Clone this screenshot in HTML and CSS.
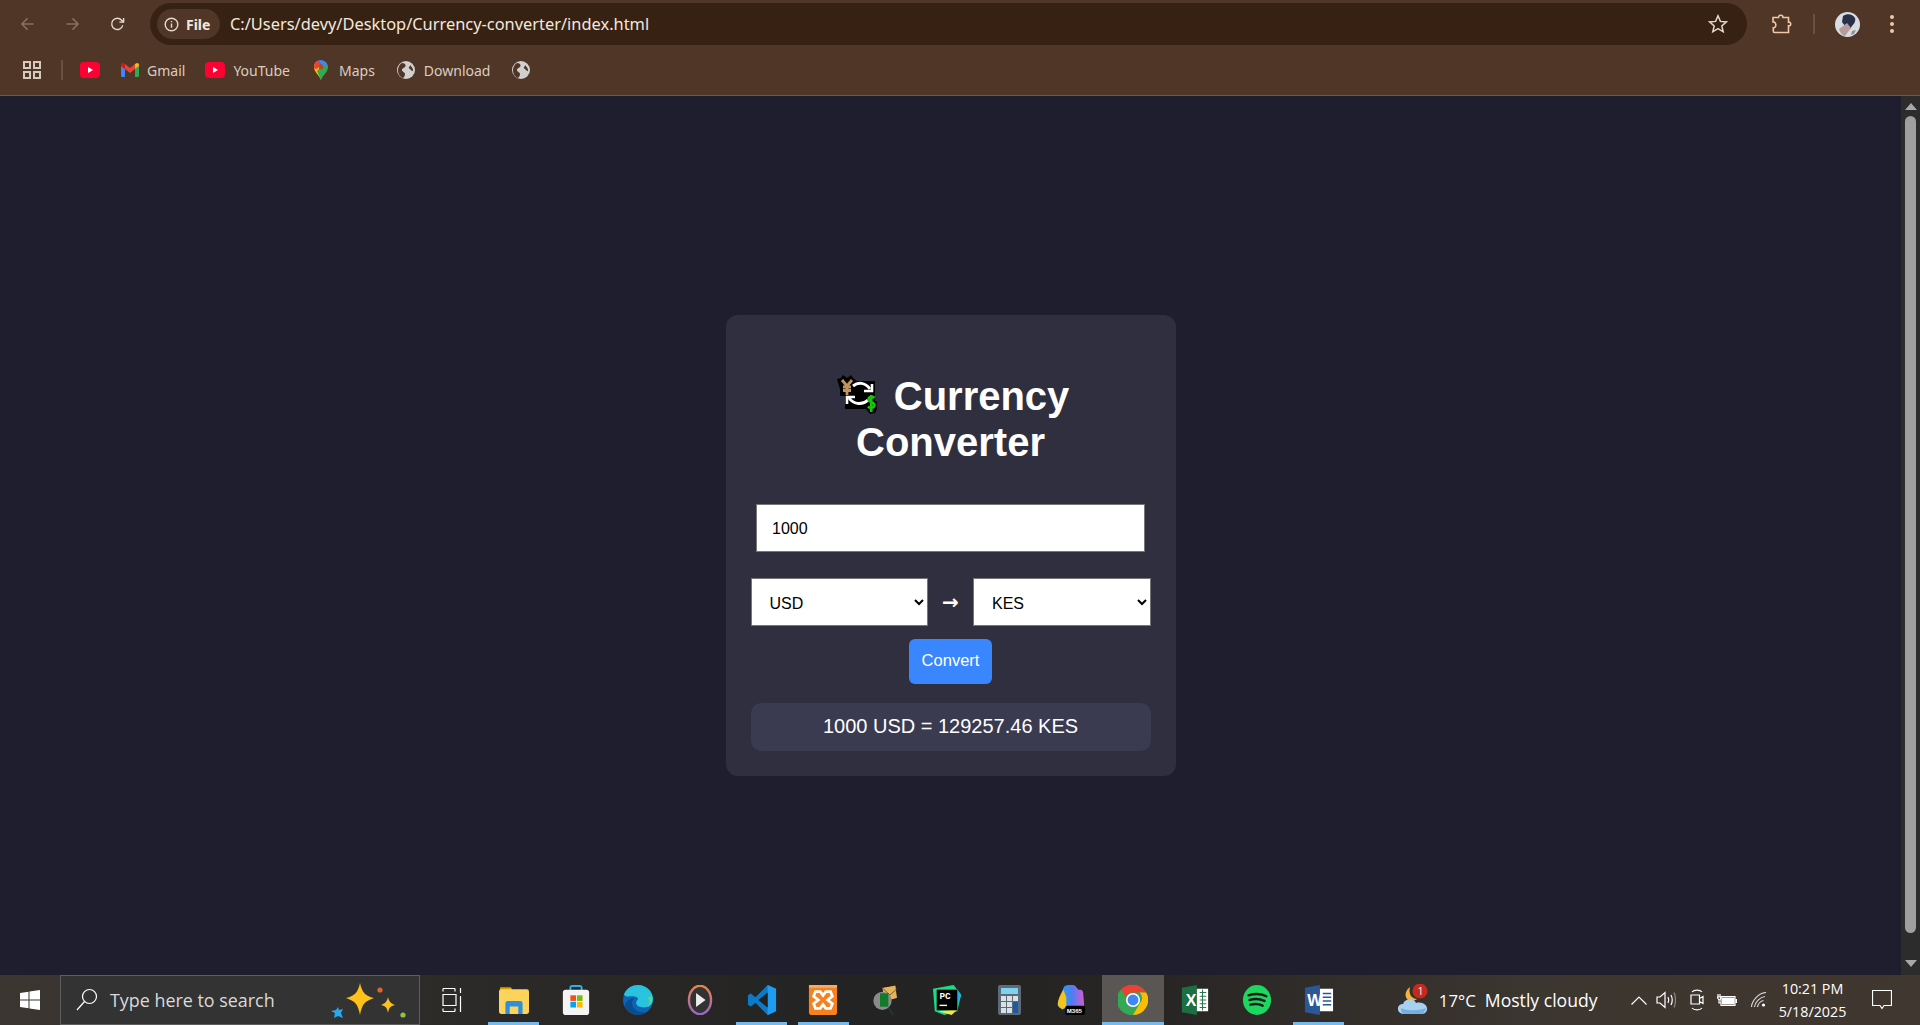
FILE: index.html
```html
<!DOCTYPE html>
<html lang="en">
<head>
<meta charset="utf-8">
<title>Currency Converter</title>
<link rel="stylesheet" href="styles.css">
</head>
<body>
<header class="chrome">
  <div class="toolbar">
    <div class="nav">
      <svg class="nav-icon" viewBox="0 0 16 16"><path d="M14.5 8H2M8 2 2 8l6 6" class="dim"/></svg>
      <svg class="nav-icon" viewBox="0 0 16 16"><path d="M1.5 8H14M8 2l6 6-6 6" class="dim"/></svg>
      <svg class="nav-icon" viewBox="0 0 16 16"><path d="M13.6 9.5A6 6 0 1 1 12.4 4L14.5 6M14.5 1.500V6H10" class="lit"/></svg>
    </div>
    <div class="omnibox">
      <div class="chip">
        <svg class="info" viewBox="0 0 16 16"><circle cx="8" cy="8" r="6.700" class="lit"/><path d="M8 7v4.500M8 4.200v1.300" class="lit"/></svg>
        <span>File</span>
      </div>
      <span class="url">C:/Users/devy/Desktop/Currency-converter/index.html</span>
      <svg class="star" viewBox="0 0 20 20"><path d="M10 1.800l2.400 5.600 6 .5-4.600 4 1.400 5.900L10 14.700l-5.200 3.100 1.400-5.900-4.600-4 6-.5z" class="lit"/></svg>
    </div>
    <div class="actions">
      <svg class="puzzle" viewBox="0 0 20 20"><path d="M1 3.500h5.500c0-3 4.500-3 4.500 0h5.500v4.700c3-.6 3 4.200 0 3.600v6.700H2.500c-.8 0-1.200-.5-1.200-1.200v-3.600c3.400.3 3.400-6-.3-5.800z" class="peach"/></svg>
      <span class="sep"></span>
      <svg class="avatar" viewBox="0 0 25 25">
        <circle cx="12.500" cy="12.500" r="12.500" fill="#d9dde2"/>
        <path d="M8 4c4-3 10-2 12 2 1 3-1 6-3 8l-2 3-5-3-3-4z" fill="#28304a"/>
        <path d="M4 17l8-6 4 5-6 8c-2 0-5-3-6-7z" fill="#b99a9c"/>
        <path d="M17 19l4-1-2 4-3 1z" fill="#8f8f93"/>
      </svg>
      <span class="menu"><i></i><i></i><i></i></span>
    </div>
  </div>
  <nav class="bookmarks">
    <svg class="apps" viewBox="0 0 18 18"><path d="M1 1h6v6H1zM11 1h6v6h-6zM1 11h6v6H1zM11 11h6v6h-6z" class="grid"/></svg>
    <span class="book-sep"></span>
    <svg class="yt yt-first" viewBox="0 0 20 16"><rect width="20" height="16" rx="4" fill="#ff0033"/><path d="M8 5l5 3-5 3z" fill="#fff"/></svg>
    <div class="mark mark-gmail">
      <svg class="gm" viewBox="0 0 18 14"><path d="M0 3v9.500c0 .8.5 1.500 1.300 1.500H4V6z" fill="#4285f4"/><path d="M14 6v8h2.700c.8 0 1.300-.7 1.300-1.500V3z" fill="#34a853"/><path d="M4 6v8h0V6l5 4 5-4V1l-5 4-5-4z" fill="#ea4335"/><path d="M0 3l4 3V1L2.500.2C1.300-.4 0 .6 0 2z" fill="#c5221f"/><path d="M14 1v5l4-3V2c0-1.400-1.300-2.400-2.500-1.800z" fill="#fbbc04"/></svg>
      <span>Gmail</span>
    </div>
    <div class="mark mark-yt">
      <svg class="yt" viewBox="0 0 20 16"><rect width="20" height="16" rx="4" fill="#ff0033"/><path d="M8 5l5 3-5 3z" fill="#fff"/></svg>
      <span>YouTube</span>
    </div>
    <div class="mark mark-maps">
      <svg class="pin" viewBox="0 0 14 20"><path d="M7 20C5 15 0 12 0 7a7 7 0 0 1 4-6.300L7 7z" fill="#fbbc04"/><path d="M7 20c2-5 7-8 7-13 0-1-.2-2-.7-3L7 7 3 11z" fill="#34a853"/><path d="M4 .7A7 7 0 0 1 13.300 4L10 7 7 4.500z" fill="#4285f4"/><path d="M1 3.500A7 7 0 0 1 4 .7L7 4 3 9 .3 8.500C-.2 6.500 0 5 1 3.500z" fill="#ea4335"/><circle cx="7" cy="7" r="2.400" fill="#a5531f"/></svg>
      <span>Maps</span>
    </div>
    <div class="mark mark-dl">
      <svg class="globe" viewBox="0 0 18 18"><circle cx="9" cy="9" r="9" fill="#d2d0ce"/><path d="M5 2c2 0 4 1 3.500 3S5 7 5 9s3 2 3 4-1 3-2 4c-3-1-5-4-5-8 0-3 2-6 4-7zM13 4c1 1 3 3 3 5s-1 1-2 0-3-2-2-3 1-1 1-2z" fill="#4f3626"/></svg>
      <span>Download</span>
    </div>
    <svg class="globe globe-last" viewBox="0 0 18 18"><circle cx="9" cy="9" r="9" fill="#d2d0ce"/><path d="M5 2c2 0 4 1 3.500 3S5 7 5 9s3 2 3 4-1 3-2 4c-3-1-5-4-5-8 0-3 2-6 4-7zM13 4c1 1 3 3 3 5s-1 1-2 0-3-2-2-3 1-1 1-2z" fill="#4f3626"/></svg>
  </nav>
</header>

<div class="viewport">
  <main class="page">
    <section class="card">
      <h1 class="title"><svg class="emoji" viewBox="0 0 46 40">
          <path d="M0 4l4-1 2-3 4 3 4-3 3 4 3 2h18v20l2 1v7l-2 4-5 1-4-5H8V21H3V14z" fill="#000"/>
          <path d="M5 5l5 6 5-6M10 11v9M6 12h8M6 15.500h8" fill="none" stroke="#c1935f" stroke-width="2.800"/>
          <path d="M16 11c5-4 12-4 17 3" fill="none" stroke="#fff" stroke-width="3"/>
          <path d="M27 16h8V9" fill="none" stroke="#fff" stroke-width="2.600"/>
          <path d="M31 25c-5 5-14 5-19-2" fill="none" stroke="#fff" stroke-width="3"/>
          <path d="M18 22h-8v7" fill="none" stroke="#fff" stroke-width="2.600"/>
          <path d="M37.500 23c-2-2-6-1-6 1.500s6 2.500 6 5.500-4.500 3.500-6.500 1.500M34.300 20v17" fill="none" stroke="#16c60c" stroke-width="2.600"/>
        </svg> Currency Converter</h1>
      <input class="amount" type="number" value="1000">
      <div class="pair">
        <select class="currency"><option>USD</option></select>
        <span class="arrow">→</span>
        <select class="currency"><option>KES</option></select>
      </div>
      <button class="convert" type="button">Convert</button>
      <div class="result">1000 USD = 129257.46 KES</div>
    </section>
  </main>
  <aside class="scrollbar">
    <span class="sb-up"></span>
    <span class="sb-thumb"></span>
    <span class="sb-down"></span>
  </aside>
</div>

<footer class="taskbar">
  <div class="start">
    <svg class="winlogo" viewBox="0 0 20 20"><path d="M0 3l8.500-1.200v7.600H0zM9.500 1.600L20 0v9.400H9.500zM0 10.500h8.500v7.700L0 17zM9.500 10.500H20V20L9.500 18.400z" fill="#fff"/></svg>
  </div>
  <div class="search">
    <svg class="lens" viewBox="0 0 22 24"><circle cx="13.500" cy="8.500" r="7" class="line"/><path d="M8.500 13.500 1 22" class="line"/></svg>
    <span class="search-text">Type here to search</span>
    <svg class="sparkle" viewBox="0 0 78 36">
      <path d="M30 1c2 9 5 13 14 15-9 3-12 6-14 17-2-11-5-14-14-17 9-2 12-6 14-15z" fill="#fcc21b"/>
      <path d="M58 15c1 4 2 6 7 8-5 1-6 3-7 8-1-5-2-7-7-8 5-2 6-4 7-8z" fill="#fcc21b"/>
      <path d="M8 25l1 3 4-1-2 4 2 5-5-2-4 2 1-5-4-2 5-1z" fill="#29a8ea"/>
      <circle cx="50" cy="8" r="2.600" fill="#e2632a"/><circle cx="73" cy="33" r="2.600" fill="#8cc63e"/>
    </svg>
  </div>
  <div class="taskview">
    <svg viewBox="0 0 20 24" class="tv"><path d="M1 .5h12M1 .5v3M13 .5v3M1 6.500h13v11H1zM1 23.500h12M1 20.500v3M13 20.500v3M18.500 0v5M18.500 8v16" class="line"/></svg>
  </div>
  <div class="apps-row">
    <div class="slot on">
      <svg class="app" viewBox="0 0 28 28"><path d="M1 2h10l2 3H1z" fill="#d9a200"/><rect x="0" y="4" width="28" height="23" rx="2" fill="#fcd45c"/><path d="M6 27V17c0-1 1-2 2-2h12c1 0 2 1 2 2v10h-4v-7h-8v7z" fill="#2f8fdc"/></svg>
    </div>
    <div class="slot">
      <svg class="app" viewBox="0 0 30 32"><path d="M9 7V3c0-1.500 1-2 2-2h8c1 0 2 .5 2 2v4" fill="none" stroke="#2bb0e6" stroke-width="2"/><rect x="1" y="5" width="28" height="27" rx="3" fill="#f4f4f4"/><rect x="9" y="11" width="6" height="6" fill="#f25022"/><rect x="16" y="11" width="6" height="6" fill="#7fba00"/><rect x="9" y="18" width="6" height="6" fill="#00a4ef"/><rect x="16" y="18" width="6" height="6" fill="#ffb900"/></svg>
    </div>
    <div class="slot">
      <svg class="app" viewBox="0 0 32 32"><circle cx="16" cy="16" r="16" fill="#0d63b4"/><path d="M1 10C4 3 10 0 16 0c9 0 16 7 16 15 0 6-5 9-10 9-4 0-8-2-8-5 0-2 2-3 2-4 0-2-3-3-6-3-4 0-7 1-9-2z" fill="#2ac3de"/><path d="M12 14c-5 0-10 4-10 9 3 6 8 9 14 9 3 0 6-1 8-3-5 1-12-2-14-7-1-3 0-6 2-8z" fill="#0a4d8f"/><path d="M31 12c1 5-1 10-5 12 3-3 3-8 0-11z" fill="#58d68d"/></svg>
    </div>
    <div class="slot">
      <svg class="app" viewBox="0 0 32 38"><defs><linearGradient id="mp" x1="0" y1="0" x2="0" y2="1"><stop offset="0" stop-color="#e8834c"/><stop offset="1" stop-color="#9a68c4"/></linearGradient></defs><ellipse cx="16" cy="19" rx="14" ry="18" fill="#333" stroke="url(#mp)" stroke-width="3"/><path d="M11 10l12 9-12 9z" fill="#eee"/></svg>
    </div>
    <div class="slot on">
      <svg class="app" viewBox="0 0 30 32"><path d="M21 0l9 4v24l-9 4L8 19l-5 4-3-2v-10l3-2 5 4z" fill="#0a7cc7"/><path d="M21 8v16l-10-8z" fill="#1e1e2f"/><path d="M21 0l9 4v24l-9 4z" fill="#1f9cf0"/><path d="M21 8v16l-8-8z" fill="#22221f"/></svg>
    </div>
    <div class="slot on">
      <svg class="app" viewBox="0 0 30 32"><rect width="30" height="32" rx="3" fill="#f5811f"/><rect y="0" width="30" height="3" fill="#f8a968"/><path d="M7 7h5l3 4 3-4h5l2 5-5 4 5 4-2 5h-5l-3-4-3 4H7l-2-5 5-4-5-4z" fill="none" stroke="#fff" stroke-width="3"/></svg>
    </div>
    <div class="slot">
      <svg class="app" viewBox="0 0 30 36"><path d="M11 3l17-3 2 16-15 4z" fill="#e6b45c" stroke="#111" stroke-width="1"/><path d="M11 3l10 9 9-8" fill="none" stroke="#6a4a1c"/><circle cx="12" cy="19" r="11" fill="#8a8a8a"/><rect x="9" y="10" width="10" height="16" fill="#127a2b"/><path d="M19 27l6 9" stroke="#333" stroke-width="2"/></svg>
    </div>
    <div class="slot">
      <svg class="app" viewBox="0 0 30 32"><path d="M0 4l22-4 8 10-4 18-14 4-10-4z" fill="#21d789"/><path d="M26 4l4 8-4 8z" fill="#21aef0"/><path d="M6 28l14 4 6-6z" fill="#f5e642"/><rect x="4" y="5" width="22" height="22" fill="#000"/><text x="7" y="15" class="pc">PC</text><rect x="7" y="21" width="8" height="1.500" fill="#fff"/></svg>
    </div>
    <div class="slot">
      <svg class="app app-calc" viewBox="0 0 23 30"><rect width="23" height="30" rx="2" fill="#5d6b78"/><rect x="3" y="3" width="17" height="6" fill="#7ed1f0"/><path d="M3 11h5v5H3zM9 11h5v5H9zM15 11h5v5h-5zM3 17h5v5H3zM9 17h5v5H9zM3 23h5v5H3zM9 23h5v5H9z" fill="#d9e1e6"/><rect x="15" y="17" width="5" height="11" fill="#1b5aa6"/></svg>
    </div>
    <div class="slot">
      <svg class="app" viewBox="0 0 30 32"><defs><linearGradient id="cp" x1="0" y1="0" x2="1" y2="0"><stop offset="0" stop-color="#1fa8e8"/><stop offset=".55" stop-color="#4f7df0"/><stop offset="1" stop-color="#d65ad6"/></linearGradient></defs><path d="M7 3c1-2 3-3 5-3h5c2 0 3 1 4 3l2 2h2c2 0 3 2 3 4l1 12c0 3-2 4-4 4H6c-4 0-6-3-5-6z" fill="url(#cp)"/><path d="M7 5C3 11 1 16 1 20c0 3 3 5 5 6l4-3V13z" fill="#f6c21c"/><rect x="9" y="22" width="21" height="10" rx="2" fill="#000"/><text x="10.500" y="30" class="m365">M365</text></svg>
    </div>
    <div class="slot active">
      <svg class="app" viewBox="0 0 32 32"><circle cx="16" cy="16" r="16" fill="#34a853"/><path d="M16 0a16 16 0 0 1 14 8H16a8 8 0 0 0-7.500 5L3 5A16 16 0 0 1 16 0z" fill="#ea4335"/><path d="M30 8a16 16 0 0 1-14 24l7-12a8 8 0 0 0 0-12z" fill="#fbbc04"/><path d="M3 5l7 12 6 15A16 16 0 0 1 3 5z" fill="#34a853"/><circle cx="16" cy="16" r="7.500" fill="#fff"/><circle cx="16" cy="16" r="5.800" fill="#4285f4"/></svg>
    </div>
    <div class="slot">
      <svg class="app" viewBox="0 0 28 32"><path d="M16 0v32L0 29V3z" fill="#1d6f42"/><rect x="16" y="4" width="12" height="24" fill="#fff"/><path d="M19 8h7M19 12h7M19 16h7M19 20h7M19 24h7M22 5v22" stroke="#1d6f42" stroke-width="1"/><text x="4" y="22" class="doc">X</text></svg>
    </div>
    <div class="slot">
      <svg class="app" viewBox="0 0 30 32"><ellipse cx="15" cy="16" rx="15" ry="16" fill="#1ed760"/><path d="M6 11c6-2 13-2 19 1M7 16c5-1.500 11-1.500 16 1M8 21c4-1 9-1 13 1" fill="none" stroke="#1b1b1b" stroke-width="2.600" stroke-linecap="round"/></svg>
    </div>
    <div class="slot on">
      <svg class="app" viewBox="0 0 30 32"><path d="M16 0v32L0 29V3z" fill="#2b5797"/><rect x="16" y="4" width="14" height="24" fill="#fff"/><path d="M19 9h9M19 13h9M19 17h9M19 21h9" stroke="#2b5797" stroke-width="1.500"/><text x="2.500" y="22" class="doc">W</text></svg>
    </div>
  </div>
  <div class="tray">
    <svg class="weather" viewBox="0 0 30 32"><path d="M12 3C8 6 6 11 9 15c3 3 8 2 10 0-5 0-9-5-7-12z" fill="#f3b33d"/><path d="M6 30c-8 0-8-10-1-10 2-6 11-6 13-1 7-2 12 3 11 7-1 3-3 4-6 4z" fill="#a8d0f0"/><path d="M3 24c5 3 18 3 25 0-1 4-3 6-6 6H6c-2 0-3-3-3-6z" fill="#77aee0"/><circle cx="22" cy="7" r="7.500" fill="#c42b1c"/><text x="19.800" y="10.500" class="badge">1</text></svg>
    <span class="temp">17°C</span>
    <span class="cond">Mostly cloudy</span>
    <svg class="t-chev" viewBox="0 0 16 9"><path d="M.5 8.500 8 1l7.500 7.500" class="line"/></svg>
    <svg class="t-vol" viewBox="0 0 20 18"><path d="M1 6h3l5-4.500v15L4 12H1z" class="line"/><path d="M12 6c1 2 1 4 0 6M15 4c1.500 3 1.500 7 0 10" class="line"/><path d="M18 1.500c2 4 2 11 0 15" class="faint"/></svg>
    <svg class="t-cam" viewBox="0 0 14 22"><path d="M1 6h8.500v9H1zM9.500 9.500 13 7.500v7l-3.500-2z" class="line"/><path d="M2 3c2-2.500 8-2.500 10 0M2 19c2 2.500 8 2.500 10 0" class="line"/></svg>
    <svg class="t-bat" viewBox="0 0 20 14"><path d="M4 3.500h14v9H4z" class="line"/><rect x="5" y="4.500" width="12.500" height="7" fill="#fff"/><rect x="18.500" y="6" width="1.500" height="4" fill="#fff"/><path d="M1 1v3M3 1v3M0 4h4c0 2-1 3-2 3zM2 7v3h2" class="line"/></svg>
    <svg class="t-wifi" viewBox="0 0 16 16"><path d="M.5 15C1 8 8 1 15 .5M3.500 15C4 10 9 5 14 4.500M6.500 15c.5-3 3-6 6-6.500" class="faint-2"/><circle cx="12.500" cy="13" r="1.600" fill="#fff"/></svg>
    <div class="clock"><span>10:21 PM</span><span>5/18/2025</span></div>
    <svg class="t-note" viewBox="0 0 20 20"><path d="M.5.5h19v15H12l-2 3-2-3H.5z" class="line"/></svg>
  </div>
</footer>
</body>
</html>
```
FILE: styles.css
```css
* { box-sizing: border-box; }
html, body { margin: 0; height: 100%; overflow: hidden; }
body {
  display: flex;
  flex-direction: column;
  height: 1025px;
  background: #1e1e2f;
  font-family: "Liberation Sans", Arial, sans-serif;
}
svg { display: block; flex: none; }
.dim { fill: none; stroke: #86705f; stroke-width: 1.6; }
.lit { fill: none; stroke: #e8d8ca; stroke-width: 1.5; }
.peach { fill: none; stroke: #f0c8a8; stroke-width: 1.6; }
.grid { fill: none; stroke: #d6c9bd; stroke-width: 2; }
.line { fill: none; stroke: #fff; stroke-width: 1.2; }
.faint { fill: none; stroke: #8a8580; stroke-width: 1.2; }
.faint-2 { fill: none; stroke: #d8d4d0; stroke-width: 1.2; }

.chrome { flex: none; height: 96px; background: #4f3626; border-bottom: 1px solid #6b5a4e; }
.toolbar { display: flex; align-items: center; height: 48px; }
.nav { display: flex; align-items: center; width: 150px; padding-left: 20px; gap: 30px; }
.nav-icon { width: 15px; height: 16px; }
.omnibox {
  flex: none;
  width: 1597px;
  height: 42px;
  display: flex;
  align-items: center;
  padding: 0 8px 0 7px;
  background: #372113;
  border-radius: 21px;
  color: #f2e8df;
}
.chip {
  display: flex;
  align-items: center;
  gap: 7px;
  width: 63px;
  height: 30px;
  padding-left: 7px;
  background: #4f3626;
  border-radius: 15px;
  font: bold 14px "Noto Sans", sans-serif;
}
.info { width: 15px; height: 15px; }
.url { margin-left: 10px; flex: 1; font: 16.4px/22px "Noto Sans", sans-serif; padding-bottom: 1px; }
.star { width: 20px; height: 20px; margin-right: 11px; }
.actions { display: flex; align-items: center; margin-left: 25px; }
.puzzle { width: 20px; height: 20px; }
.sep { width: 2px; height: 20px; background: #6b5040; margin-left: 21px; }
.avatar { width: 25px; height: 25px; margin-left: 20px; }
.menu { display: flex; flex-direction: column; gap: 3px; margin-left: 30px; }
.menu i { display: block; width: 4px; height: 4px; border-radius: 50%; background: #f0c8a8; }

.bookmarks {
  display: flex;
  align-items: center;
  height: 44px;
  padding-left: 23px;
  color: #dccdc0;
  font: 14px "Noto Sans", sans-serif;
}
.apps { width: 18px; height: 18px; }
.book-sep { width: 2px; height: 20px; background: #6b5040; margin-left: 20px; }
.yt { width: 20px; height: 16px; }
.yt-first { margin-left: 17px; }
.mark { display: flex; align-items: center; gap: 8px; }
.mark-gmail { margin-left: 21px; }
.mark-yt { margin-left: 20px; gap: 8px; }
.mark-maps { margin-left: 24px; gap: 11px; }
.mark-dl { margin-left: 22px; gap: 9px; }
.gm { width: 18px; height: 14px; }
.pin { width: 14px; height: 20px; }
.globe { width: 18px; height: 18px; }
.globe-last { margin-left: 22px; }

.viewport { flex: 1; display: flex; min-height: 0; }
.page {
  flex: 1;
  display: flex;
  align-items: center;
  justify-content: center;
  padding-top: 20px;
}
.card {
  width: 450px;
  padding: 25px;
  background: #2f2f3f;
  border-radius: 12px;
  text-align: center;
}
.title {
  margin: 33px 0 39px;
  color: #fff;
  font-size: 40px;
  font-weight: bold;
  line-height: 46px;
}
.emoji { display: inline-block; width: 46px; height: 40px; vertical-align: -5px; margin: -10px 0 0 5px; }
.amount {
  display: block;
  width: 389px;
  height: 48px;
  margin: 10px auto;
  padding: 2px 15px 0;
  border: 1px solid #767676;
  background: #fff;
  color: #000;
  font: 16px "Liberation Sans", Arial, sans-serif;
  appearance: textfield;
}
.pair { display: flex; align-items: center; margin-top: 26px; }
.currency {
  flex: 1;
  min-width: 0;
  height: 48px;
  padding: 2px 13px 0 14px;
  border: 1px solid #767676;
  background: #fff;
  color: #000;
  font: 16px "Liberation Sans", Arial, sans-serif;
}
.arrow { width: 45px; color: #fff; font: bold 20px "DejaVu Sans", sans-serif; text-align: center; }
.convert {
  display: block;
  width: 83px;
  height: 45px;
  margin: 13px auto 19px;
  padding: 0 0 2px;
  border: 0;
  border-radius: 6px;
  background: #3a86ff;
  color: #fff;
  font: 16.5px "Liberation Sans", Arial, sans-serif;
}
.result {
  height: 48px;
  line-height: 46px;
  background: #3a3a50;
  border-radius: 10px;
  color: #fff;
  font-size: 20px;
}

.scrollbar {
  flex: none;
  width: 19px;
  display: flex;
  flex-direction: column;
  align-items: center;
  background: #2c2c2c;
}
.sb-up { margin-top: 7px; border: 6px solid transparent; border-top: 0; border-bottom: 7px solid #a8a8a8; }
.sb-thumb { flex: 1; width: 11px; margin: 6px 0 27px; border-radius: 6px; background: #9f9f9f; }
.sb-down { margin-bottom: 8px; border: 6px solid transparent; border-bottom: 0; border-top: 7px solid #a8a8a8; }

.taskbar {
  flex: none;
  height: 50px;
  display: flex;
  align-items: center;
  background: linear-gradient(90deg, #3b3630 0, #2c2a28 25%, #232323 45%, #272524 60%, #3c3630 80%, #40372f 100%);
  color: #fff;
}
.start { width: 60px; display: flex; justify-content: center; }
.winlogo { width: 20px; height: 20px; }
.search {
  width: 360px;
  height: 50px;
  display: flex;
  align-items: center;
  padding-left: 15px;
  background: #333;
  border: 1px solid #5e5e5e;
  color: #dadada;
  font: 17.9px "Open Sans", sans-serif;
}
.lens { width: 22px; height: 24px; }
.search-text { margin-left: 12px; flex: 1; white-space: nowrap; }
.sparkle { width: 78px; height: 36px; margin-right: 11px; }
.taskview { width: 63px; display: flex; justify-content: center; }
.tv { width: 20px; height: 24px; }
.apps-row { display: flex; height: 50px; }
.slot {
  width: 61.9px;
  display: flex;
  align-items: center;
  justify-content: center;
}
.slot.on { background: linear-gradient(#76b9ed, #76b9ed) center bottom / 51px 3px no-repeat; }
.slot.active { background: linear-gradient(#76b9ed, #76b9ed) center bottom / 100% 3px no-repeat, #5a5654; }
.app { width: 30px; height: 30px; }
.app-calc { width: 23px; }
.pc { fill: #fff; font: bold 10px "Liberation Mono", monospace; }
.m365 { fill: #fff; font: bold 6.5px "Liberation Sans", sans-serif; }
.doc { fill: #fff; font: bold 17px "Liberation Sans", sans-serif; }
.badge { fill: #fff; font: 10px "Open Sans", sans-serif; }
.tray { display: flex; align-items: center; height: 50px; margin-left: 48.400px; }
.weather { width: 30px; height: 32px; }
.temp { margin-left: 11px; font: 16.8px "Open Sans", sans-serif; }
.cond { margin-left: 9px; font: 17.6px "Open Sans", sans-serif; }
.t-chev { width: 16px; height: 9px; margin-left: 33px; }
.t-vol { width: 20px; height: 18px; margin-left: 9px; }
.t-cam { width: 14px; height: 22px; margin-left: 14px; }
.t-bat { width: 20px; height: 14px; margin-left: 13px; }
.t-wifi { width: 16px; height: 16px; margin-left: 14px; }
.clock {
  width: 68px;
  margin-left: 12px;
  display: flex;
  flex-direction: column;
  align-items: center;
  gap: 4px;
  font: 14.3px/19px "Open Sans", sans-serif;
}
.t-note { width: 20px; height: 20px; margin-left: 25px; }
```
